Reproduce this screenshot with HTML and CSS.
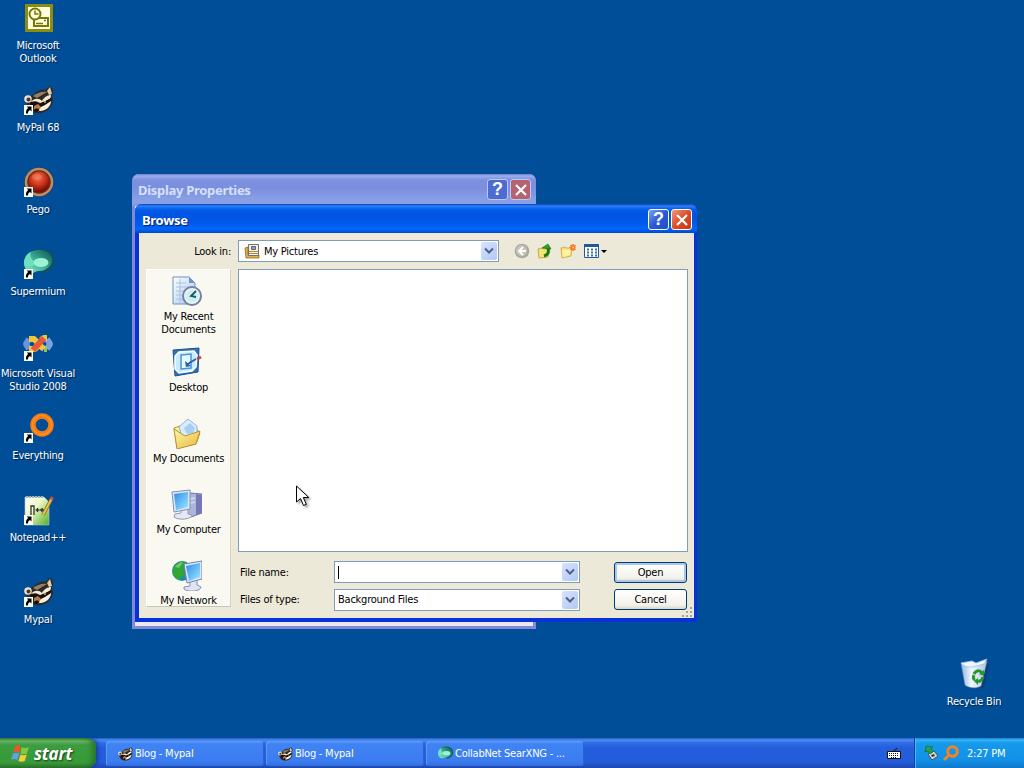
FILE: index.html
```html
<!DOCTYPE html>
<html lang="en">
<head>
  <meta charset="UTF-8">
  <meta name="viewport" content="width=device-width, initial-scale=1.0">
  <title>Desktop</title>
  <link rel="stylesheet" href="styles.css">
</head>
<body>
  <!-- shared icons -->
  <svg class="sprites" aria-hidden="true">
    <defs>
      <radialGradient id="red-ball" cx="45%" cy="30%" r="65%">
        <stop offset="0" stop-color="#f2714f"/><stop offset=".5" stop-color="#d03a20"/><stop offset="1" stop-color="#7c0d04"/>
      </radialGradient>
      <linearGradient id="teal-ball" x1="0" y1="1" x2="1" y2="0">
        <stop offset="0" stop-color="#8ff0d0"/><stop offset=".55" stop-color="#35a58e"/><stop offset="1" stop-color="#0d4f55"/>
      </linearGradient>
      <linearGradient id="screen" x1="0" y1="0" x2="1" y2="1">
        <stop offset="0" stop-color="#2f8be8"/><stop offset="1" stop-color="#9ce9ff"/>
      </linearGradient>
      <linearGradient id="folder" x1="0" y1="0" x2="1" y2="1">
        <stop offset="0" stop-color="#fff6a8"/><stop offset="1" stop-color="#e6b93a"/>
      </linearGradient>
      <linearGradient id="paper" x1="0" y1="0" x2="1" y2="1">
        <stop offset="0" stop-color="#ffffff"/><stop offset="1" stop-color="#a9c6ee"/>
      </linearGradient>
      <linearGradient id="npp" x1="0" y1="0" x2="1" y2="1">
        <stop offset="0" stop-color="#ffffff"/><stop offset=".4" stop-color="#eef8c8"/><stop offset="1" stop-color="#4fae24"/>
      </linearGradient>
      <linearGradient id="bin" x1="0" y1="0" x2="1" y2="0">
        <stop offset="0" stop-color="#8fb4e0"/><stop offset=".4" stop-color="#f2f8ff"/><stop offset="1" stop-color="#a8c2e4"/>
      </linearGradient>
    </defs>

    <symbol id="shortcut" viewBox="0 0 9 10">
      <path fill="#fff" d="M0 0h9v10H0z"/>
      <path d="M2.6 1.5h4.9v4.9L6 5C4.4 5.800 4 7 3.900 8.500H2C1.700 6.200 2.500 4.400 4.200 3.100z"/>
    </symbol>

    <symbol id="outlook" viewBox="0 0 32 32">
      <path fill="#8c8c10" d="M3 2h28v28H3z"/>
      <path fill="#fffde0" d="M6 5h22v22H6z"/>
      <path fill="#fffde0" stroke="#777706" stroke-width="2" d="M12 16h14v8H12z"/>
      <circle cx="13" cy="12" r="5.500" fill="#fffde0" stroke="#777706" stroke-width="2"/>
      <path fill="none" stroke="#777706" stroke-width="1.500" d="M13 8.500V12h3.500M14 21.500h7M22 18.500h2"/>
    </symbol>

    <symbol id="raccoon" viewBox="0 0 32 32">
      <path fill="#33281f" d="M12 10c3-3 7-5 11-4l5-4c3 2 4 6 2 10 2 5 0 10-4 14-4 3-12 5-17 1-4-3-6-8-3-13z"/>
      <path fill="#d9cdb9" d="M25 7l3-4 2 7-3 1z"/>
      <circle cx="6" cy="15" r="3.800" fill="#e9dfcc"/>
      <circle cx="6.500" cy="15.500" r="2" fill="#4a382b"/>
      <path fill="#8f806c" d="M11 12c4-3 9-5 14-4l-10 6z"/>
      <path fill="#f3e9d8" d="M9 18c3-4 8-4 11-1 2-4 6-6 9-6 0 3-1 4-3 5l-8 3c-3-2-6-2-9-1z"/>
      <path fill="#14100d" d="M8 19c4-2 7-1 10 1l11-6c0 4-3 7-7 8l-8 2c-3 0-5-1-6-5z"/>
      <path fill="#f7efdf" d="M17 24l6-3 6-4c0 5-4 9-10 10-3 0-4-1-2-3z"/>
      <path fill="#ba784d" d="M12 22l4-2 3 3-3 5-4-2z"/>
      <path fill="#110d0b" d="M12 26c1-2 5-2 5 0s-4 3-5 0z"/>
      <circle cx="23" cy="18" r="1" fill="#e6a253"/>
    </symbol>

    <symbol id="pego" viewBox="0 0 32 32">
      <circle cx="17" cy="16" r="14.500" fill="#6b2a16"/>
      <circle cx="17" cy="16" r="13" fill="none" stroke="#b88f69" stroke-width="2.500"/>
      <circle cx="17" cy="16" r="10.500" fill="url(#red-ball)"/>
      <ellipse cx="15" cy="11" rx="5" ry="3" fill="#ff9a78" opacity=".35"/>
    </symbol>

    <symbol id="supermium" viewBox="0 0 32 32">
      <path fill="#145259" d="M9 4c6-5 22-4 23 7 1 8-6 14-13 14z"/>
      <path fill="url(#teal-ball)" d="M2 15C2 7 8 2 17 2c8 0 13 4 13 10s-6 11-13 11c-3 0-5 2-7 2-5-1-8-5-8-10z"/>
      <path fill="#70dfbd" d="M2 14C3 9 5 6 9 4c-2 5 1 9 5 10-2 5-7 6-12 3z"/>
      <ellipse cx="19" cy="14.500" rx="7.500" ry="4.500" fill="#9cf2d4"/>
    </symbol>

    <symbol id="vstudio" viewBox="0 0 32 32">
      <g fill="none" stroke-width="6" stroke-linejoin="round">
        <path stroke="#6a93dc" d="M7 9l-3 5 3 5"/>
        <path stroke="#edc83b" d="M7 9h5l4 4M7 19h6l3-3"/>
        <path stroke="#7ba2e6" d="M25 9l3 5-3 5"/>
        <path stroke="#8ec45a" d="M25 19h-3"/>
        <path stroke="#efc440" d="M16 14l6 5M19 10l3-2h3"/>
        <path stroke="#e8573a" d="M11 20l11-12"/>
      </g>
    </symbol>

    <symbol id="everything" viewBox="0 0 32 32">
      <circle cx="20" cy="13" r="9" fill="none" stroke="#f77c12" stroke-width="5.500"/>
      <circle cx="20" cy="13" r="9.500" fill="none" stroke="#ff9a35" stroke-width="1"/>
    </symbol>

    <symbol id="notepad" viewBox="0 0 32 32">
      <path fill="url(#npp)" stroke="#b9c8c0" stroke-width=".6" d="M3 3h19l5 5v23H3z"/>
      <path fill="none" stroke="#aab4be" stroke-dasharray="2 1" stroke-width="2" d="M4 3h17"/>
      <path fill="none" stroke="#333" stroke-width="1.300" d="M9 21v-9h3v9M13.500 16h4M15.500 14v4M18 16h4M20 14v4"/>
      <path stroke="#8b6b1d" stroke-width="3.500" d="M30 4l-9 17"/>
      <path stroke="#ecc04a" stroke-width="2" d="M30 4l-9 17"/>
      <path stroke="#d64834" stroke-width="3" d="M30.500 3l-1.500 2.500"/>
    </symbol>

    <symbol id="recycle" viewBox="0 0 32 32">
      <path fill="#14365c" opacity=".6" d="M9 28l17 3 5-24-3-1z"/>
      <path fill="url(#bin)" stroke="#7397c2" stroke-width=".5" d="M3 6l4 22c4 3 11 4 16 1l6-25-11 4z"/>
      <path fill="#eef6ff" stroke="#aac3e3" stroke-width=".8" d="M3 6l11-2 4 2 11-4-3 5-12 3c-5 0-9-1-11-4z"/>
      <g fill="none" stroke="#27952c" stroke-width="3">
        <path d="M16 17c2-4 6-4 8-1M25 20c-1 4-4 5-7 4M17 23c-2-1-2-3-1-5"/>
      </g>
      <path fill="#27952c" d="M26 13v6l-5-2zM20 21v7l-4-4z"/>
    </symbol>

    <symbol id="recent" viewBox="0 0 32 32">
      <path fill="url(#paper)" stroke="#6f8fc4" d="M3 2h16l6 6v21H3z"/>
      <path fill="#6d96cf" d="M19 2v6h6z"/>
      <path fill="none" stroke="#a8c1e4" d="M6 8h10M6 12h15M6 16h15M6 20h10M6 24h9M10 4v23"/>
      <circle cx="22" cy="21" r="9" fill="#e8f8fb" stroke="#77809d" stroke-width="2"/>
      <circle cx="22" cy="21" r="6.500" fill="#cdeef2"/>
      <path fill="none" stroke="#1c5a60" stroke-width="1.800" d="M26 16l-5 5 5 1"/>
    </symbol>

    <symbol id="show-desktop" viewBox="0 0 32 32">
      <path fill="#2f70b8" stroke="#1c5292" d="M3 4l26-2-1 24-23 4z"/>
      <path fill="#c8ecff" stroke="#fff" stroke-width="1.500" d="M9 6l15-1 3 4-1 12-4 4-13 2-4-4V10z"/>
      <path fill="#e5f7ff" stroke="#4d94d6" stroke-width="1.500" d="M11 9l10-1v14l-10 1z"/>
      <path fill="none" stroke="#2364ac" stroke-width="2" d="M16 19l10-6"/>
      <path fill="#2364ac" d="M15 15l1 6 5-1z"/>
      <path stroke="#b7493d" stroke-width="3" d="M27 13l4-2"/>
    </symbol>

    <symbol id="documents" viewBox="0 0 32 32">
      <path fill="url(#folder)" stroke="#b59435" d="M4 11l6-2 3 2 12-1 5 6-4 11-19 4z"/>
      <path fill="#d8edfc" stroke="#91b6d9" d="M9 10l9-8 9 7v12l-13 4z"/>
      <path fill="#a9cef1" d="M14 11l6-5 5 5-2 5-6 1z"/>
      <path fill="url(#folder)" stroke="#b59435" d="M4 12l11 7 15-5-4 13-19 5z"/>
    </symbol>

    <symbol id="computer" viewBox="0 0 32 32">
      <path fill="#aeb3da" stroke="#7177ac" d="M20 5l12 1v19l-11 4-5-4V7z"/>
      <path fill="#7379b5" d="M26 6l6 1v18l-6 2z"/>
      <path fill="#ced4ee" d="M20 10l5-1v2l-5 1zM20 14l5-1v2l-5 1z"/>
      <path fill="#e5e7f3" stroke="#9199b8" d="M11 21l7-1v6l4 1c0 4-13 6-18 2l1-3 6-1z"/>
      <path fill="#dce7f6" stroke="#7f91b4" d="M2 4l18-2v19L4 24z"/>
      <path fill="url(#screen)" d="M4 6l14-2v15L6 22z"/>
    </symbol>

    <symbol id="network" viewBox="0 0 32 32">
      <circle cx="12" cy="12" r="10" fill="#2785b5"/>
      <path fill="#30a72f" d="M3 10c2-6 8-9 14-7l-4 7 2 5-6 6C4 19 2 14 3 10z"/>
      <path fill="#b5e8b1" opacity=".5" d="M5 8c2-3 5-5 8-5L9 9z"/>
      <path fill="#e0e4f3" stroke="#838db4" d="M20 21l7-1v6l4 2c0 4-12 6-17 2v-2l6-1z"/>
      <path fill="#dce7f6" stroke="#6f83b2" d="M14 5l18-3v18l-15 4z"/>
      <path fill="url(#screen)" d="M16 7l14-3v14l-11 4z"/>
    </symbol>

    <symbol id="pictures" viewBox="0 0 16 16">
      <path fill="#e0b04a" stroke="#8d6a24" stroke-width=".8" d="M1 5l3-1v8h11v3H2z"/>
      <path fill="#f4f2e7" stroke="#756e66" d="M4.500 1.500h10v11h-10z"/>
      <path fill="#8d9dbd" stroke="#5c6680" d="M7.500 3.500h4v3h-4z"/>
      <path stroke="#b8873c" d="M5 8.500h9M5 10.500h9"/>
    </symbol>
    <symbol id="chevron" viewBox="0 0 10 8">
      <path fill="none" stroke="#4d6185" stroke-width="2" d="M1 1.500l4 4 4-4"/>
    </symbol>
    <symbol id="close" viewBox="0 0 12 12">
      <path stroke="#fff" stroke-width="2.200" d="M1 1l10 10M11 1L1 11"/>
    </symbol>
    <symbol id="flag" viewBox="0 0 18 18">
      <path fill="#ed562b" d="M4 2c2-1 4-1 5 0L8 8C6 7 4 7 2 8z"/>
      <path fill="#7fc943" d="M10 3c2 1 4 1 7 0l-2 6c-2 1-4 1-6 0z"/>
      <path fill="#659df0" d="M2 9c2-1 4-1 6 0l-2 6c-2-1-4-1-6 0z"/>
      <path fill="#f8cb38" d="M9 10c2 1 4 1 6 0l-2 6c-2 1-4 1-6 0z"/>
    </symbol>
  </svg>

  <main class="desktop">
    <div class="icons">
      <div class="icon">
        <div class="picture"><svg><use href="#outlook"/></svg></div>
        <span>Microsoft<br>Outlook</span>
      </div>
      <div class="icon">
        <div class="picture"><svg><use href="#raccoon"/></svg><svg class="arrow"><use href="#shortcut"/></svg></div>
        <span>MyPal 68</span>
      </div>
      <div class="icon">
        <div class="picture"><svg><use href="#pego"/></svg><svg class="arrow"><use href="#shortcut"/></svg></div>
        <span>Pego</span>
      </div>
      <div class="icon">
        <div class="picture"><svg><use href="#supermium"/></svg><svg class="arrow"><use href="#shortcut"/></svg></div>
        <span>Supermium</span>
      </div>
      <div class="icon">
        <div class="picture"><svg><use href="#vstudio"/></svg><svg class="arrow"><use href="#shortcut"/></svg></div>
        <span>Microsoft Visual<br>Studio 2008</span>
      </div>
      <div class="icon">
        <div class="picture"><svg><use href="#everything"/></svg><svg class="arrow"><use href="#shortcut"/></svg></div>
        <span>Everything</span>
      </div>
      <div class="icon">
        <div class="picture"><svg><use href="#notepad"/></svg><svg class="arrow"><use href="#shortcut"/></svg></div>
        <span>Notepad++</span>
      </div>
      <div class="icon">
        <div class="picture"><svg><use href="#raccoon"/></svg><svg class="arrow"><use href="#shortcut"/></svg></div>
        <span>Mypal</span>
      </div>
    </div>

    <div class="icon recycle-bin">
      <div class="picture"><svg><use href="#recycle"/></svg></div>
      <span>Recycle Bin</span>
    </div>

    <section class="window properties">
      <header class="titlebar">
        <h2>Display Properties</h2>
        <button class="title-button help">?</button>
        <button class="title-button close"><svg><use href="#close"/></svg></button>
      </header>
    </section>

    <section class="window browse">
      <header class="titlebar">
        <h2>Browse</h2>
        <button class="title-button help">?</button>
        <button class="title-button close"><svg><use href="#close"/></svg></button>
      </header>

      <div class="dialog">
        <div class="toolbar">
          <label>Look in:</label>
          <div class="combo look-in">
            <svg class="small-icon"><use href="#pictures"/></svg>
            <span>My Pictures</span>
            <i class="drop"><svg><use href="#chevron"/></svg></i>
          </div>
          <div class="tools">
            <svg viewBox="0 0 16 16">
              <circle cx="8" cy="8" r="7.300" fill="#aaa99f"/>
              <circle cx="7.500" cy="7.500" r="5.500" fill="#c4c3ba"/>
              <path fill="none" stroke="#fff" stroke-width="2" d="M9 4L5 8l4 4M5 8h7"/>
            </svg>
            <svg viewBox="0 0 16 16">
              <path fill="#f4e476" stroke="#b69e35" stroke-width=".8" d="M1 6l4-1 1 1h7l-2 8-9 1z"/>
              <path fill="none" stroke="#147b19" stroke-width="3" d="M7 13c4-1 5-4 4-8"/>
              <path fill="#2b9e2b" stroke="#126916" stroke-width=".6" d="M5 5l6-4 3 5z"/>
            </svg>
            <svg viewBox="0 0 16 16">
              <path fill="#f5df71" stroke="#caa93e" stroke-width=".8" d="M1 5l4-1 1 1h6l-1 8-9 2z"/>
              <path fill="#fff2a2" d="M2 7l9-1-1 6-7 2z"/>
              <path stroke="#ef7028" stroke-width="1.400" d="M13 1v7M9.500 4.500h6M10.500 2l5 5M15.500 2l-5 5"/>
              <circle cx="13" cy="4.500" r="1" fill="#ffe55a"/>
            </svg>
            <svg class="views" viewBox="0 0 24 16">
              <path fill="#fff" stroke="#24569e" d="M1.500 1.500h14v13h-14z"/>
              <path fill="#24569e" d="M1 1h15v3H1z"/>
              <path stroke="#3473a8" stroke-width="2" stroke-dasharray="2 2" d="M4 6.500h10M4 9.500h10M4 12.500h10"/>
              <path d="M18 7h6l-3 3z"/>
            </svg>
          </div>
        </div>

        <nav class="places">
          <a><svg><use href="#recent"/></svg>My Recent<br>Documents</a>
          <a><svg><use href="#show-desktop"/></svg>Desktop</a>
          <a><svg><use href="#documents"/></svg>My Documents</a>
          <a><svg><use href="#computer"/></svg>My Computer</a>
          <a><svg><use href="#network"/></svg>My Network</a>
        </nav>

        <div class="file-list"></div>

        <div class="fields">
          <label>File name:</label>
          <div class="combo"><b class="caret"></b><i class="drop"><svg><use href="#chevron"/></svg></i></div>
          <button class="push default">Open</button>
          <label>Files of type:</label>
          <div class="combo"><span>Background Files</span><i class="drop"><svg><use href="#chevron"/></svg></i></div>
          <button class="push">Cancel</button>
        </div>
      </div>
      <svg class="grip" viewBox="0 0 10 10"><path fill="#aaa58f" d="M8 0h2v2H8zM4 4h2v2H4zM8 4h2v2H8zM0 8h2v2H0zM4 8h2v2H4zM8 8h2v2H8z"/></svg>
    </section>

    <svg class="cursor" viewBox="0 0 14 22">
      <path fill="#fff" stroke="#000" d="M.5 1v16l4-3.500 3 7 2.800-1.200-3-6.800h5.500z"/>
    </svg>
  </main>

  <footer class="taskbar">
    <button class="start"><svg><use href="#flag"/></svg>start</button>
    <div class="tasks">
      <button><svg><use href="#raccoon"/></svg>Blog - Mypal</button>
      <button><svg><use href="#raccoon"/></svg>Blog - Mypal</button>
      <button><svg><use href="#supermium"/></svg>CollabNet SearXNG - ...</button>
    </div>
    <svg class="keyboard" viewBox="0 0 14 12">
      <path fill="none" stroke="#111" d="M7 4c0-2 3-1 3-3"/>
      <path fill="#fff" stroke="#111" d="M.5 4.500h13v7H.5z"/>
      <path stroke="#111" stroke-dasharray="1 1" d="M2 6.500h10M2 8.500h10M4 10.500h6"/>
    </svg>
    <div class="tray">
      <svg viewBox="0 0 16 16">
        <path fill="#d7ded4" stroke="#47515a" d="M4 9l6-3 4 5-6 4z"/>
        <path fill="#343b40" d="M7 10l3-1 1 2-3 1z"/>
        <path fill="#25a34c" stroke="#116a34" stroke-width=".7" d="M2 1l7 1-2 2 2 3-3 2-2-3-3 1z"/>
      </svg>
      <svg viewBox="0 0 16 16">
        <circle cx="9.500" cy="6.500" r="4.800" fill="none" stroke="#f58220" stroke-width="3"/>
        <path stroke="#f58220" stroke-width="3" d="M6 10l-5 5"/>
      </svg>
      <time>2:27 PM</time>
    </div>
  </footer>
</body>
</html>
```
FILE: styles.css
```css
* {
  box-sizing: border-box;
}

body {
  margin: 0;
  width: 1024px;
  height: 768px;
  display: flex;
  flex-direction: column;
  overflow: hidden;
  background: #004e98;
  color: #000;
  font: 11px/13px "DejaVu Sans Condensed", "DejaVu Sans", sans-serif;
  letter-spacing: -0.23px;
}

button {
  font: inherit;
  letter-spacing: inherit;
  padding: 0;
}

svg {
  display: block;
  flex: none;
}

.sprites {
  position: absolute;
  width: 0;
  height: 0;
}

.desktop {
  position: relative;
  flex: 1;
}

/* Desktop icons */
.icons {
  width: 76px;
  padding-top: 2px;
}

.icon {
  height: 82px;
  display: flex;
  flex-direction: column;
  align-items: center;
  color: #fff;
  text-align: center;
  white-space: nowrap;
  text-shadow: 1px 1px 1px #00234a;
}

.picture {
  position: relative;
  width: 32px;
  height: 32px;
  margin-bottom: 5px;
}

.picture svg {
  width: 32px;
  height: 32px;
}

.picture .arrow {
  position: absolute;
  left: 2px;
  bottom: 1px;
  width: 9px;
  height: 10px;
}

.recycle-bin {
  position: absolute;
  left: 936px;
  top: 657px;
  width: 76px;
}

.recycle-bin .picture {
  margin-bottom: 6px;
}

/* Windows */
.window {
  position: absolute;
  border-radius: 7px 7px 0 0;
}

.properties {
  left: 132px;
  top: 174px;
  width: 404px;
  height: 455px;
  border: solid #8089d5;
  border-width: 0 3px 3px;
  background: #e9e8f2;
}

.browse {
  left: 135px;
  top: 204px;
  width: 562px;
  height: 418px;
  border: solid #0831d9;
  border-width: 0 3px 4px 4px;
  background: #ece9d8;
}

.titlebar {
  height: 29px;
  display: flex;
  align-items: center;
  gap: 2px;
  margin: 0 -3px 0 -4px;
  padding: 2px 5px 0 7px;
  border-radius: 7px 7px 0 0;
  background: linear-gradient(#0b3fc0 0, #2d80f5 2px, #0560ec 5px, #0053e1 10px, #0058ea 18px, #0066fa 25px, #0048cf 29px);
}

.titlebar h2 {
  flex: 1;
  margin: 0;
  color: #fff;
  font: bold 13px/16px "Noto Sans", sans-serif;
  letter-spacing: -0.3px;
  text-shadow: 1px 1px 1px #0b1b6b;
}

.title-button {
  width: 21px;
  height: 21px;
  display: grid;
  place-items: center;
  border: 1px solid #fff;
  border-radius: 3px;
  background: linear-gradient(135deg, #7ea1f3, #2a58d8 50%, #1f50cd);
  color: #fff;
  font: bold 18px/19px "Liberation Sans", sans-serif;
}

.title-button.close {
  background: linear-gradient(135deg, #f09a7d, #df4c24 50%, #c43b12);
}

.title-button svg {
  width: 12px;
  height: 12px;
}

.properties .titlebar {
  height: 32px;
  margin: 0 -3px;
  padding: 0 5px 1px 6px;
  background: linear-gradient(#6f7dce 0, #99adf0 2px, #7d90de 6px, #7a8fdf 14px, #8ca2e6 28px, #8298de 32px);
}

.properties .titlebar h2 {
  color: #d5e0fb;
  text-shadow: none;
}

.properties .title-button {
  border-color: #bdc9f4;
  background: #4c6cd0;
}

.properties .close {
  background: #b7636f;
}

/* Browse dialog */
.dialog {
  display: grid;
  grid-template-columns: 85px 450px;
  grid-template-rows: 22px 283px 49px;
  column-gap: 7px;
  row-gap: 7px;
  padding: 7px 6px 0 7px;
}

.toolbar {
  grid-column: 1 / 3;
  display: flex;
  align-items: center;
}

.toolbar label {
  width: 85px;
  margin-right: 7px;
  text-align: right;
}

.combo {
  height: 22px;
  display: flex;
  align-items: center;
  border: 1px solid #7f9db9;
  background: #fff;
  padding: 1px 1px 1px 3px;
}

.combo span {
  white-space: nowrap;
}

.look-in {
  width: 261px;
  padding-left: 5px;
}

.small-icon {
  width: 16px;
  height: 16px;
  margin-right: 4px;
}

.drop {
  width: 16px;
  height: 18px;
  margin-left: auto;
  display: grid;
  place-items: center;
  border-radius: 2px;
  background: linear-gradient(135deg, #d6e2fe, #b3c8f6);
}

.drop svg {
  width: 10px;
  height: 8px;
}

.tools {
  display: flex;
  gap: 7px;
  margin-left: 15px;
}

.tools svg {
  width: 16px;
  height: 16px;
}

.tools .views {
  width: 24px;
}

.places {
  grid-row: 2 / 4;
  height: 338px;
  padding-top: 5px;
  overflow: hidden;
  border: 1px solid #fff;
  border-right-color: #d8d3bd;
  border-bottom-color: #c9c6b8;
  background: #f9f9f2;
}

.places a {
  height: 71px;
  display: block;
  text-align: center;
  white-space: nowrap;
}

.places svg {
  width: 32px;
  height: 32px;
  margin: 0 auto 3px 23px;
}

.file-list {
  border: 1px solid #7f9db9;
  background: #fff;
}

.fields {
  display: grid;
  grid-template-columns: 94px 246px 73px;
  grid-template-rows: 22px 21px;
  row-gap: 6px;
  align-items: center;
  padding: 2px 0 0 2px;
}

.fields .combo {
  height: 22px;
}

.fields .push {
  margin-left: 34px;
}

.caret {
  width: 1px;
  height: 13px;
  background: #000;
}

.push {
  width: 73px;
  height: 21px;
  border: 1px solid #003c74;
  border-radius: 3px;
  background: linear-gradient(#fff, #f3f2ea 80%, #d9d4c7);
}

.push.default {
  box-shadow: inset 0 0 0 2px #aec5ee;
}

.grip {
  position: absolute;
  right: 2px;
  bottom: 1px;
  width: 10px;
  height: 10px;
}

.cursor {
  position: absolute;
  left: 296px;
  top: 485px;
  width: 14px;
  height: 22px;
  filter: drop-shadow(2px 2px 1px rgba(0, 0, 0, 0.35));
}

/* Taskbar */
.taskbar {
  height: 30px;
  display: flex;
  align-items: stretch;
  background: linear-gradient(#2459c9 0, #4b8cf2 2px, #306ce5 5px, #245edc 10px, #245ddb 24px, #1c46ae 30px);
  color: #fff;
}

.start {
  width: 96px;
  display: flex;
  align-items: center;
  gap: 4px;
  padding: 1px 0 0 11px;
  border: 0;
  border-radius: 0 9px 9px 0;
  background: linear-gradient(#337a36 0, #69b768 3px, #3d9c3f 7px, #379b39 20px, #3a9a3b 25px, #286e2b 30px);
  box-shadow: inset -5px 0 6px -2px #226f27, 2px 0 4px #143f9c;
  color: #fff;
  font: italic bold 17px/24px "Open Sans", sans-serif;
  letter-spacing: -0.2px;
  text-shadow: 1px 1px 2px #173e18;
}

.start svg {
  width: 19px;
  height: 19px;
}

.tasks {
  flex: 1;
  display: flex;
  gap: 2px;
  padding: 3px 0 2px 10px;
}

.tasks button {
  width: 158px;
  display: flex;
  align-items: center;
  gap: 2px;
  padding: 0 0 0 11px;
  border: 0;
  border-radius: 3px;
  background: linear-gradient(#6098f7 0, #3f83f4 3px, #3b7df0 20px, #346fdb 25px);
  box-shadow: inset 1px 1px 0 #5d9bfb, inset -1px 0 0 #2a61cf;
  color: #fff;
  white-space: nowrap;
}

.tasks svg {
  width: 16px;
  height: 16px;
}

.keyboard {
  width: 14px;
  height: 12px;
  margin: 9px 13px 0 0;
}

.tray {
  width: 110px;
  display: flex;
  align-items: center;
  gap: 3px;
  padding-left: 9px;
  border-left: 1px solid #0f3f9f;
  background: linear-gradient(#1280d5 0, #38b3f4 2px, #159aec 5px, #1290e8 22px, #0f77c9 30px);
  box-shadow: inset 1px 0 0 #3fc0f8;
}

.tray svg {
  width: 16px;
  height: 16px;
}

.tray time {
  margin-left: 5px;
  white-space: nowrap;
}
```
